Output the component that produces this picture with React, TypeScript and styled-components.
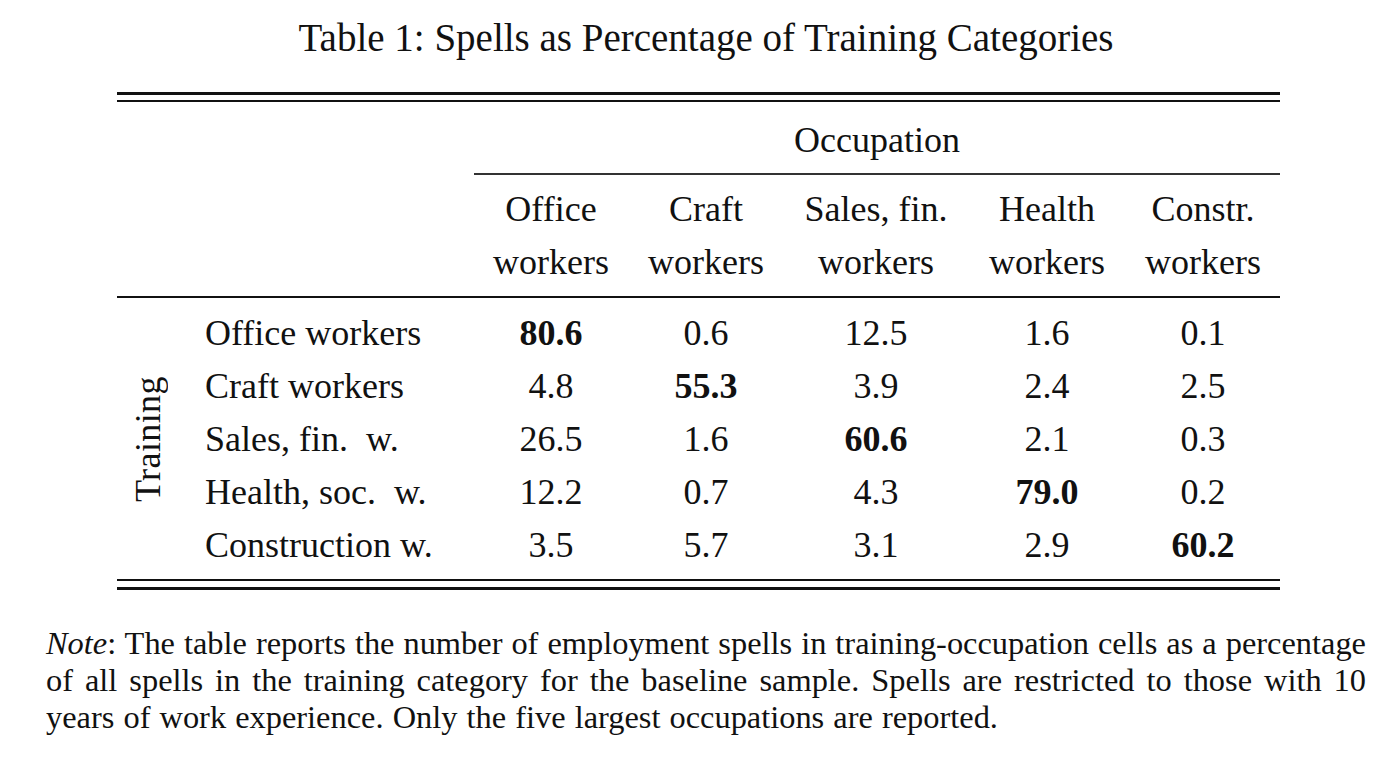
import styled, { createGlobalStyle } from "styled-components";

const GlobalStyle = createGlobalStyle`
  html, body {
    margin: 0;
    padding: 0;
    background: #ffffff;
  }
  body {
    font-family: "Liberation Serif", "Times New Roman", serif;
    color: #111111;
  }
`;

const columns = "63px 294px 154px 156px 184px 158px 154px";

const occupations = [
  ["Office", "workers"],
  ["Craft", "workers"],
  ["Sales, fin.", "workers"],
  ["Health", "workers"],
  ["Constr.", "workers"],
];

const rows: { label: string; values: string[] }[] = [
  { label: "Office workers", values: ["80.6", "0.6", "12.5", "1.6", "0.1"] },
  { label: "Craft workers", values: ["4.8", "55.3", "3.9", "2.4", "2.5"] },
  { label: "Sales, fin.  w.", values: ["26.5", "1.6", "60.6", "2.1", "0.3"] },
  { label: "Health, soc.  w.", values: ["12.2", "0.7", "4.3", "79.0", "0.2"] },
  { label: "Construction w.", values: ["3.5", "5.7", "3.1", "2.9", "60.2"] },
];

export default function App() {
  return (
    <>
      <GlobalStyle />
      <Page>
        <Caption>Table 1: Spells as Percentage of Training Categories</Caption>
        <Table>
          <Rule $weight={3} />
          <Rule $weight={2} $gap={5} />

          <Grid $top={12} $bottom={6}>
            <Spanner>Occupation</Spanner>
          </Grid>
          <Grid>
            <SubRule />
          </Grid>

          <Grid $top={8} $bottom={7}>
            {occupations.map(([first, second], i) => (
              <HeadCell key={i} $col={i + 3}>
                <span>{first}</span>
                <span>{second}</span>
              </HeadCell>
            ))}
          </Grid>
          <Rule $weight={2} />

          <Grid $top={9} $bottom={7}>
            <SideLabel>Training</SideLabel>
            {rows.map((row, r) => (
              <Row key={r}>
                <RowLabel>{row.label}</RowLabel>
                {row.values.map((v, c) => (
                  <Value key={c} $bold={r === c}>
                    {v}
                  </Value>
                ))}
              </Row>
            ))}
          </Grid>

          <Rule $weight={2} />
          <Rule $weight={3} $gap={6} />
        </Table>

        <Note>
          <NoteLine $justify>
            <em>Note</em>: The table reports the number of employment spells in
            training-occupation cells as a percentage
          </NoteLine>
          <NoteLine $justify>
            of all spells in the training category for the baseline sample.
            Spells are restricted to those with 10
          </NoteLine>
          <NoteLine>
            years of work experience. Only the five largest occupations are
            reported.
          </NoteLine>
        </Note>
      </Page>
    </>
  );
}

const Page = styled.main`
  width: 1320px;
  padding: 13px 0 0 46px;
`;

const Caption = styled.h1`
  margin: 0;
  font-weight: normal;
  font-size: 39px;
  line-height: 50px;
  text-align: center;
`;

const Table = styled.section`
  width: 1163px;
  margin: 29px 0 0 71px;
  font-size: 36px;
`;

const Rule = styled.div<{ $weight: number; $gap?: number }>`
  height: ${(p) => p.$weight}px;
  margin-top: ${(p) => p.$gap ?? 0}px;
  background: #111111;
`;

const Grid = styled.div<{ $top?: number; $bottom?: number }>`
  display: grid;
  grid-template-columns: ${columns};
  padding-top: ${(p) => p.$top ?? 0}px;
  padding-bottom: ${(p) => p.$bottom ?? 0}px;
`;

const Spanner = styled.div`
  grid-column: 3 / 8;
  text-align: center;
  line-height: 53px;
`;

const SubRule = styled.div`
  grid-column: 3 / 8;
  height: 2px;
  background: #333333;
`;

const HeadCell = styled.div<{ $col: number }>`
  grid-column: ${(p) => p.$col};
  display: flex;
  flex-direction: column;
  align-items: center;
  line-height: 53px;
  white-space: pre;
`;

const SideLabel = styled.div`
  grid-column: 1;
  grid-row: 1 / 6;
  display: flex;
  align-items: center;
  justify-content: center;
  writing-mode: vertical-rl;
  transform: rotate(180deg);
  padding-left: 1px;
  letter-spacing: 0.4px;
`;

const Row = styled.div`
  display: contents;
`;

const RowLabel = styled.div`
  grid-column: 2;
  padding-left: 25px;
  line-height: 53px;
  white-space: pre;
`;

const Value = styled.div<{ $bold?: boolean }>`
  text-align: center;
  line-height: 53px;
  font-weight: ${(p) => (p.$bold ? "bold" : "normal")};
`;

const Note = styled.section`
  margin-top: 35px;
  font-size: 32.4px;
  line-height: 37px;
`;

const NoteLine = styled.p<{ $justify?: boolean }>`
  margin: 0;
  white-space: nowrap;
  text-align: ${(p) => (p.$justify ? "justify" : "left")};
  text-align-last: ${(p) => (p.$justify ? "justify" : "left")};
  word-spacing: ${(p) => (p.$justify ? "0" : "1px")};
`;
